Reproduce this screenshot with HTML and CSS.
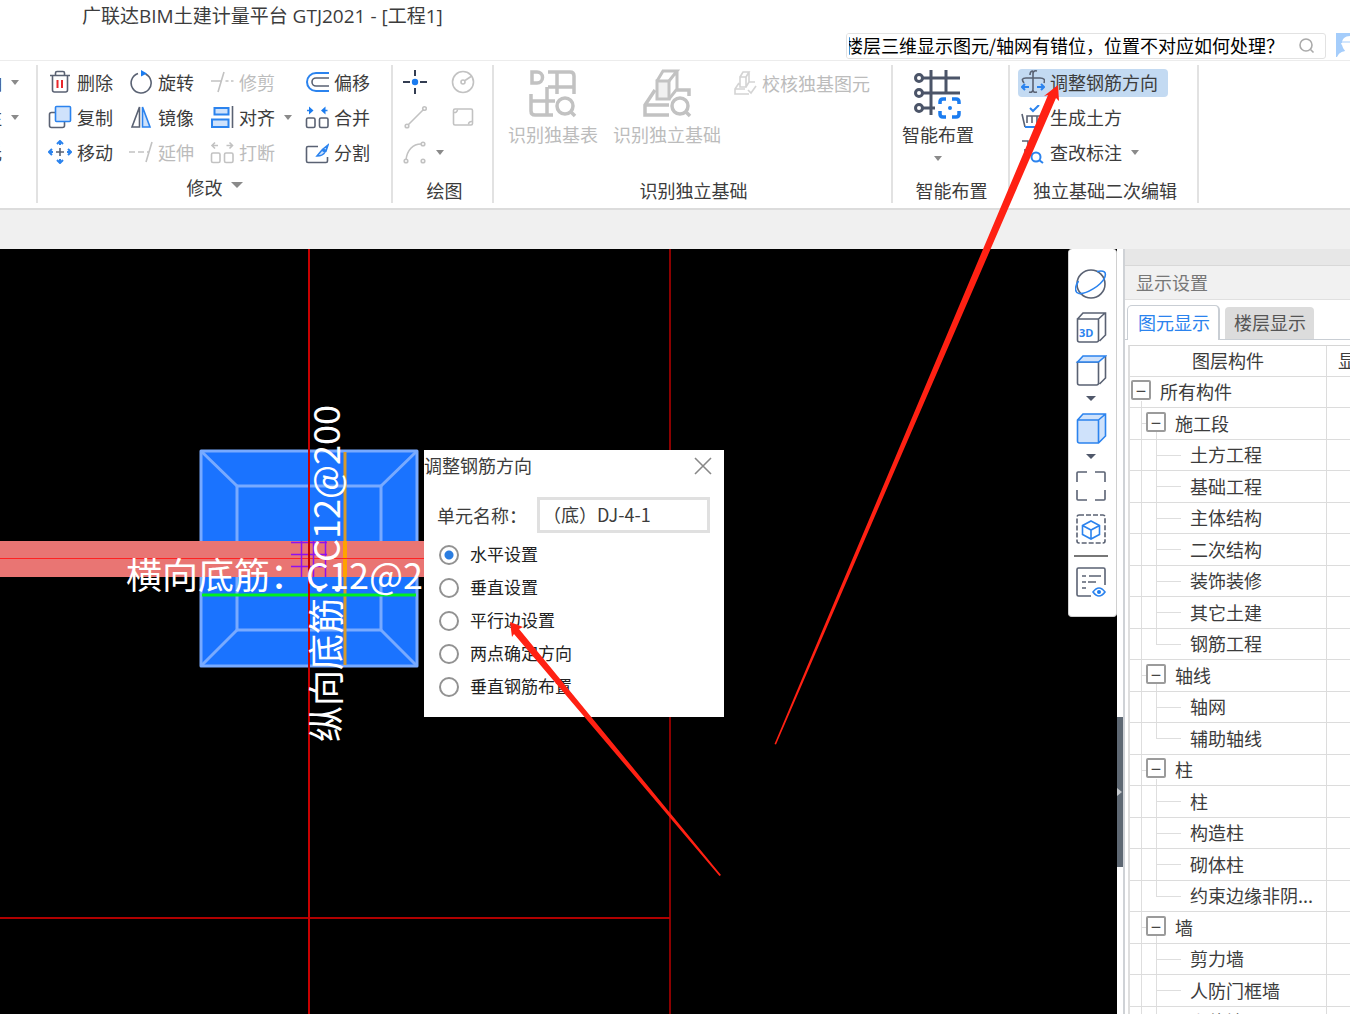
FILE: index.html
```html
<!DOCTYPE html>
<html lang="zh-CN">
<head>
<meta charset="utf-8">
<title>广联达BIM土建计量平台 GTJ2021 - [工程1]</title>
<link rel="stylesheet" href="styles.css">
</head>
<body>
<div class="app">
  <header class="titlebar">
    <h1>广联达BIM土建计量平台 GTJ2021 - [工程1]</h1>
  </header>
  <div class="searchrow">
    <form class="search">
      <input type="text" aria-label="搜索" value="楼层三维显示图元/轴网有错位，位置不对应如何处理？">
      <button type="button" aria-label="查找"><svg width="18" height="18" viewBox="0 0 18 18" fill="none" stroke="#aaa" stroke-width="1.6"><circle cx="8" cy="8" r="6"/><path d="M12.5 12.5l3 3"/></svg></button>
    </form>
    <svg class="avatar" width="14" height="24" viewBox="0 0 14 24"><path fill="#a5cdfb" d="M0 0h14v24H0z"/><path fill="#fff" d="M14 3c-5 0-8 3-8 7-2 0 0 2 0 2 1 4 3 5 3 6-4 1-6 2-8 6h13z"/><path d="M6 9h8" stroke="#a5cdfb"/></svg>
  </div>

  <nav class="ribbon" aria-label="功能区">
    <section class="group edge">
      <div class="rows">
        <button class="tool">轴<i class="caret"></i></button>
        <button class="tool">注<i class="caret"></i></button>
        <button class="tool nocaret">元</button>
      </div>
    </section>

    <section class="group modify">
      <div class="grid">
        <button class="tool"><svg class="ic" viewBox="0 0 24 24"><path d="M2 5.500h20M4.500 5.500V20a2 2 0 0 0 2 2h11a2 2 0 0 0 2-2V5.500M7.500 5V3a1.500 1.500 0 0 1 1.500-1.500h6A1.500 1.500 0 0 1 16.500 3v2"/><path class="r" d="M9.500 10v8M14 10v8"/></svg>删除</button>
        <button class="tool"><svg class="ic" viewBox="0 0 24 24"><path d="M16.500 4A10 10 0 1 1 9 3.500"/><path class="bf" d="M12 0l6 3.500-6 3z"/></svg>旋转</button>
        <button class="tool off"><svg class="ic" viewBox="0 0 24 24"><path d="M1 11h11M15.500 11h3M21 11h2.500M14 2L8 22"/></svg>修剪</button>
        <button class="tool"><svg class="ic" viewBox="0 0 24 24"><path class="b w" d="M24 3H11a9 9 0 0 0 0 18h13"/><path d="M24 8H11a4 4 0 0 0 0 8h13"/></svg>偏移</button>

        <button class="tool"><svg class="ic" viewBox="0 0 24 24"><rect x="1.500" y="7.500" width="15" height="15" rx="2"/><rect class="bl" x="7.500" y="1.500" width="15" height="15" rx="1"/></svg>复制</button>
        <button class="tool"><svg class="ic" viewBox="0 0 24 24"><path d="M10.500 2v20H3z"/><path class="bl" d="M13.500 2v20H21z"/></svg>镜像</button>
        <button class="tool"><svg class="ic" viewBox="0 0 24 24"><path class="bl w" d="M4.500 3h14v6.500h-14zM2 14.500h16.500V22H2z"/><path d="M22.500 1v22"/></svg>对齐<i class="caret"></i></button>
        <button class="tool"><svg class="ic" viewBox="0 0 24 24"><rect x="1.500" y="13" width="8.500" height="9.500" rx="1.500"/><rect x="14.500" y="13" width="8.500" height="9.500" rx="1.500"/><path class="b" d="M2 5.500h4M22.500 5.500h-4"/><path class="bf" d="M4 1.500l4.500 4-4.500 4zM20.500 1.500l-4.500 4 4.500 4z"/></svg>合并</button>

        <button class="tool"><svg class="ic" viewBox="0 0 24 24"><path d="M12 8v8M8 12h8"/><path class="b w" d="M12 1v4M12 19v4M1 12h4M19 12h4M9 4l3-3 3 3M9 20l3 3 3-3M4 9l-3 3 3 3M20 9l3 3-3 3"/></svg>移动</button>
        <button class="tool off"><svg class="ic" viewBox="0 0 24 24"><path d="M0 12h6M9 12h6M18 12h2M23 2l-6 20"/></svg>延伸</button>
        <button class="tool off"><svg class="ic" viewBox="0 0 24 24"><rect x="1.500" y="13" width="8.500" height="9.500" rx="1.500"/><rect x="14.500" y="13" width="8.500" height="9.500" rx="1.500"/><path d="M2 5.500h6M22.500 5.500h-6M5 2.500l-3 3 3 3M19.500 2.500l3 3-3 3"/></svg>打断</button>
        <button class="tool"><svg class="ic" viewBox="0 0 24 24"><path d="M13 6.500H3A1.500 1.500 0 0 0 1.500 8v13A1.500 1.500 0 0 0 3 22.500h18a1.500 1.500 0 0 0 1.500-1.500v-4"/><path class="bl" d="M12 16l5-6 3 2q-2 4-8 4zM18 9l5-4-2 6z"/></svg>分割</button>
      </div>
      <h2 class="label high">修改<i class="caret big"></i></h2>
    </section>

    <section class="group draw">
      <div class="grid">
        <button class="tool" aria-label="点"><svg class="ic" viewBox="0 0 24 24"><path class="d" d="M12 0v6M12 18v6M0 12h7M17 12h7"/><circle class="bf" cx="12" cy="12" r="3.200"/></svg></button>
        <button class="tool off" aria-label="圆"><svg class="ic" viewBox="0 0 24 24"><circle cx="12" cy="12" r="10.500"/><circle cx="12" cy="12" r="2"/><path d="M14 10.500l6-4"/></svg></button>
        <button class="tool off" aria-label="直线"><svg class="ic" viewBox="0 0 24 24"><path d="M5.500 19.500L20 5"/><circle cx="4" cy="21" r="1.800"/><circle cx="21.500" cy="3.500" r="1.800"/></svg></button>
        <button class="tool off" aria-label="矩形"><svg class="ic" viewBox="0 0 24 24"><rect x="2.500" y="4" width="19" height="16" rx="1.500"/><path d="M6.500 4.500a3 3 0 0 1-3.500 3M17.500 19.500a3 3 0 0 1 3.500-3"/></svg></button>
        <button class="tool off" aria-label="弧"><svg class="ic" viewBox="0 0 24 24"><path d="M3 20C4 10 10 4 18 4"/><circle cx="3" cy="21" r="1.800"/><circle cx="20" cy="4" r="1.800"/><circle cx="20" cy="21" r="1.800"/></svg><i class="caret"></i></button>
      </div>
      <h2 class="label">绘图</h2>
    </section>

    <section class="group identify">
      <div class="bigs">
        <button class="big off"><svg width="48" height="48" viewBox="0 0 48 48"><path stroke-width="3.500" d="M3 3h5a5.500 5.500 0 0 1 0 11H3zM19 3h22q4 0 4 4v18M19 18h26M28 3v22M18 18v28M2 25v17q0 4 4 4h18M2 32h24"/><circle cx="36" cy="37" r="8" stroke-width="3.500"/><path stroke-width="3.500" d="M41 42l5 5"/></svg>识别独基表</button>
        <button class="big off"><svg width="48" height="48" viewBox="0 0 48 48"><path stroke-width="3.500" d="M12 21L2 36v10h24M2 36h24M34 21h12v6"/><path stroke-width="3" fill="#f0f0f0" d="M14 12h12v18H14z"/><path stroke-width="3" d="M14 12l6-10h14L26 12M34 2v18l-8 10"/><circle cx="37" cy="37" r="8" stroke-width="3.500"/><path stroke-width="3.500" d="M42 42l5 5"/></svg>识别独立基础</button>
        <button class="tool off check"><svg class="ic" viewBox="0 0 24 24"><path d="M6 12l-4 6v5h14M2 18h10M7 6v10h6V6zM7 6l3-5h6l-3 5M16 1v10l-3 5M15 19l3 3 5-7M16 11h6"/></svg>校核独基图元</button>
      </div>
      <h2 class="label">识别独立基础</h2>
    </section>

    <section class="group smart">
      <div class="bigs">
        <button class="big"><svg width="48" height="48" viewBox="0 0 48 48"><g fill="none" stroke="#4b5468" stroke-width="3"><circle cx="5" cy="9" r="3.500"/><circle cx="5" cy="24" r="3.500"/><circle cx="5" cy="39" r="3.500"/><path d="M8 9h38M8 24h38M8 39h13M17 1v45M32 1v22"/></g><path fill="none" stroke="#1b7cf0" stroke-width="3.500" d="M26 35v-2q0-3 3-3h3M38 30h4q3 0 3 3v2M45 42v3q0 3-3 3h-4M32 48h-3q-3 0-3-3v-3"/><circle cx="36" cy="39" r="2" fill="#1b7cf0"/></svg>智能布置<i class="caret"></i></button>
      </div>
      <h2 class="label">智能布置</h2>
    </section>

    <section class="group second">
      <div class="rows">
        <button class="tool on"><svg class="ic" viewBox="0 0 24 24"><path d="M12 1v18q0 4-4 3M12 4q0-4 4-3M3 13q-4-5 2-5h14q6 0 4 5M9 5q0-4 3-4M12 20q0 3 4 2"/><path class="b w" d="M8 17H1M16 17h7M4 14l-3 3 3 3M20 14l3 3-3 3"/></svg>调整钢筋方向</button>
        <button class="tool"><svg class="ic" viewBox="0 0 24 24"><path d="M1 9l3 13M23 9l-3 13M6 18v-7h14M11 11v7M16 11v7"/><path class="b w" d="M4 22h16M9 3l3 3 6-6"/></svg>生成土方</button>
        <button class="tool"><svg class="ic" viewBox="0 0 24 24"><path d="M1 1h6v4M4 9v6"/><circle class="b w" cx="15" cy="17" r="4.500"/><path class="b w" d="M18 20l4 3"/></svg>查改标注<i class="caret"></i></button>
      </div>
      <h2 class="label">独立基础二次编辑</h2>
    </section>
  </nav>

  <div class="substrip"></div>

  <main class="workspace">
    <div class="canvas">
      <svg class="drawing" width="100%" height="100%">
        <g transform="translate(0 -249)">
          <path d="M670 249v1000" stroke="#8b0000" stroke-width="2"/>
          <path d="M0 918h670" stroke="#b00000" stroke-width="2"/>
          <rect x="200" y="450" width="218" height="217" fill="#1a73ff"/>
          <g fill="none" stroke="#78aaff" stroke-width="3" stroke-linejoin="round"><rect x="201" y="451" width="216" height="215"/><rect x="237" y="486" width="144" height="144"/><path d="M201 451l36 35M417 451l-36 35M201 666l36-36M417 666l-36-36"/></g>
          <path d="M345 452v213" stroke="#d79a2b" stroke-width="3"/>
          <rect x="0" y="541" width="424" height="36" fill="#e97573"/>
          <path d="M345 541v36" stroke="#ffa200" stroke-width="4"/>
          <path d="M0 558.500h424" stroke="#ff2222"/>
          <path d="M291 542.500h36M291 554.500h36M291 566.500h36M301.500 541v36M313.500 541v36M325.500 541v36" stroke="#9010f0" stroke-width="1.500"/>
          <path d="M202 595h214" stroke="#00f020" stroke-width="3"/>
          <path d="M309 249v1000" stroke="#c80000" stroke-width="2"/>
          <text class="mark" x="126" y="589">横向底筋：C12@200</text>
          <text class="mark" transform="translate(340 742) rotate(-90)">纵向底筋：C12@200</text>
        </g>
      </svg>

      <div class="dialog" role="dialog" aria-label="调整钢筋方向">
        <div class="dialog-head"><span>调整钢筋方向</span><button aria-label="关闭"><svg width="18" height="18" viewBox="0 0 18 18"><path d="M1 1l16 16M17 1L1 17" stroke="#888" stroke-width="1.600"/></svg></button></div>
        <div class="field"><label for="unit">单元名称：</label><input id="unit" type="text" value="（底）DJ-4-1"></div>
        <label class="opt"><input type="radio" name="dir" checked><span>水平设置</span></label>
        <label class="opt"><input type="radio" name="dir"><span>垂直设置</span></label>
        <label class="opt"><input type="radio" name="dir"><span>平行边设置</span></label>
        <label class="opt"><input type="radio" name="dir"><span>两点确定方向</span></label>
        <label class="opt"><input type="radio" name="dir"><span>垂直钢筋布置</span></label>
      </div>

      <div class="palette">
        <button aria-label="动态观察"><svg viewBox="0 0 32 32"><circle cx="16" cy="16" r="14"/><path class="b" d="M3.500 13C-1 20 0 25 4 25.500c7 1 22-8 25.500-15.500C32 4 29 2 22 3.500"/></svg></button>
        <button aria-label="三维"><svg viewBox="0 0 32 32"><path d="M2.500 8h21v21q0 2-2 2h-17q-2 0-2-2zM2.500 8L8 2h22.500v22l-6 6M23.500 8l6.500-6"/><text x="4" y="26">3D</text></svg></button>
        <button aria-label="俯视"><svg viewBox="0 0 32 32"><path d="M2.500 8h21v21q0 2-2 2h-17q-2 0-2-2zM30.500 2v22l-6 6"/><path class="bl" d="M2.500 8L8 2h22.500l-7 6z"/></svg></button>
        <i class="caret dark"></i>
        <button aria-label="实体"><svg viewBox="0 0 32 32"><path class="bl" d="M2.500 8L8 2h22.500v22l-7 7h-19q-2 0-2-2zM2.500 8h21v23M23.500 8l7-6"/></svg></button>
        <i class="caret dark"></i>
        <button aria-label="全屏"><svg viewBox="0 0 32 32"><path d="M2 12V3q0-1 1-1h9M20 2h9q1 0 1 1v9M30 20v9q0 1-1 1h-9M12 30H3q-1 0-1-1v-9"/></svg></button>
        <button aria-label="选择"><svg viewBox="0 0 32 32"><rect x="2" y="2" width="28" height="28" rx="2" stroke-dasharray="5 2"/><path class="b" d="M16 8l8.500 4.500v9L16 26l-8.500-4.500v-9zM7.500 12.500L16 17l8.500-4.500M16 17v9"/></svg></button>
        <hr>
        <button aria-label="显示设置"><svg viewBox="0 0 32 32"><path d="M16 30H3.500Q2 30 2 28.500v-25Q2 2 3.500 2h25Q30 2 30 3.500V19M7 10h4M14 10h12M7 16h4M13 16h8M7 22h4"/><path class="b" d="M18 26q6-8 12 0-6 8-12 0z"/><circle class="bf" cx="24" cy="26" r="2"/></svg></button>
      </div>
    </div>

    <div class="splitter"><button aria-label="折叠面板"></button></div>

    <aside class="panel">
      <div class="panel-top"></div>
      <h2 class="panel-title">显示设置</h2>
      <div class="tabs"><button class="tab active">图元显示</button><button class="tab">楼层显示</button></div>
      <table class="tree">
        <thead><tr><th>图层构件</th><th class="next">显示</th></tr></thead>
        <tbody>
          <tr><td class="l0"><button class="box">−</button>所有构件</td><td></td></tr>
          <tr><td class="l1"><button class="box">−</button>施工段</td><td></td></tr>
          <tr><td class="l2">土方工程</td><td></td></tr>
          <tr><td class="l2">基础工程</td><td></td></tr>
          <tr><td class="l2">主体结构</td><td></td></tr>
          <tr><td class="l2">二次结构</td><td></td></tr>
          <tr><td class="l2">装饰装修</td><td></td></tr>
          <tr><td class="l2">其它土建</td><td></td></tr>
          <tr><td class="l2 last">钢筋工程</td><td></td></tr>
          <tr><td class="l1"><button class="box">−</button>轴线</td><td></td></tr>
          <tr><td class="l2">轴网</td><td></td></tr>
          <tr><td class="l2 last">辅助轴线</td><td></td></tr>
          <tr><td class="l1"><button class="box">−</button>柱</td><td></td></tr>
          <tr><td class="l2">柱</td><td></td></tr>
          <tr><td class="l2">构造柱</td><td></td></tr>
          <tr><td class="l2">砌体柱</td><td></td></tr>
          <tr><td class="l2 last">约束边缘非阴...</td><td></td></tr>
          <tr><td class="l1"><button class="box">−</button>墙</td><td></td></tr>
          <tr><td class="l2">剪力墙</td><td></td></tr>
          <tr><td class="l2">人防门框墙</td><td></td></tr>
          <tr><td class="l2">砌体墙</td><td></td></tr>
        </tbody>
      </table>
    </aside>
  </main>

  <svg class="arrows" width="100%" height="100%" fill="#ff2113" aria-hidden="true">
    <path d="M774.500 744L1048 95l-4 1 14-11 1 16-3-3L776 744.500z"/>
    <path d="M719.500 876L514 634l-2 3-2-15 13 5-4 2L721 875z"/>
  </svg>
</div>
</body>
</html>
```
FILE: styles.css
```css
* { box-sizing: border-box; }

body {
  margin: 0;
  font: 18px/22px "Noto Sans CJK SC", sans-serif;
  color: #3c3c3c;
  background: #fff;
}

button, input { font: inherit; color: inherit; margin: 0; }
button { padding: 0; border: 0; background: none; white-space: nowrap; }
h1, h2 { margin: 0; font-size: 18px; font-weight: 400; white-space: nowrap; }

.app {
  position: relative;
  display: flex;
  flex-direction: column;
  height: 100vh;
  overflow: hidden;
}

.titlebar { flex: none; height: 33px; padding: 5px 0 0 82px; }
.titlebar h1 { font-family: "Open Sans", "Noto Sans CJK SC", sans-serif; font-size: 19px; line-height: 22px; }

/* search */
.searchrow { flex: none; display: flex; justify-content: flex-end; gap: 10px; height: 27px; }
.search { display: flex; align-items: center; width: 480px; height: 26px; border: 1px solid #e2e2e2; border-radius: 3px; overflow: hidden; }
.search input { flex: 1; min-width: 0; height: 24px; padding: 0 0 2px 2px; border: 0; outline: 0; color: #000; text-indent: -4px; }
.search button { display: flex; margin-right: 9px; }

/* ribbon */
.ribbon { flex: none; display: flex; height: 150px; padding-top: 4px; border-top: 1px solid #ececec; border-bottom: 2px solid #dcdcdc; }
.group { flex: none; display: flex; flex-direction: column; justify-content: space-between; height: 138px; border-right: 2px solid #e2e2e2; }
.rows, .grid, .bigs { height: 105px; }
.rows { display: grid; grid-template-rows: repeat(3, 35px); align-items: center; justify-items: start; }
.grid { display: grid; grid-template-rows: repeat(3, 35px); align-items: center; }
.label { display: flex; justify-content: center; align-items: center; height: 26px; }
.label.high { height: 32px; }

.tool { display: flex; align-items: center; gap: 5px; height: 28px; line-height: 26px; padding-bottom: 1px; border-radius: 4px; }
.tool.on { background: #c3daf2; }
.off { color: #bcbcbc; }

.ic { flex: none; width: 24px; height: 24px; fill: none; stroke: #5a6273; stroke-width: 1.6; }
.off svg { fill: none; stroke: #c2c2c2; }
.ic .d { stroke: #333d52; stroke-width: 2; }
.r { stroke: #e8262b; stroke-width: 2; }
.b { stroke: #2b83ee; }
.w { stroke-width: 2; }
.bl { stroke: #2b83ee; fill: #cfe2fb; }
.bf { fill: #1b7cf0; stroke: none; }

.caret { flex: none; width: 0; height: 0; border: 4px solid transparent; border-top: 5px solid #8a8a8a; border-bottom: 0; }
.caret.big { margin-left: 8px; border-width: 6px 6px 0; }
.caret.dark { border-width: 5px 5px 0; border-top-color: #50586a; }
.tool .caret { margin-left: 4px; }

.edge { width: 38px; overflow: hidden; }
.edge .rows { grid-template-columns: minmax(0, 1fr); justify-items: end; padding-right: 17px; }
.edge .nocaret { padding-right: 17px; }
.modify { width: 355px; }
.modify .grid { grid-template-columns: 81px 81px 95px 86px; padding-left: 10px; }
.draw { width: 101px; }
.draw .grid { grid-template-columns: 48px 48px; padding-left: 10px; }
.draw .label { padding-left: 4px; }
.identify { width: 399px; }
.bigs { display: flex; align-items: flex-start; }
.identify .bigs { padding-left: 14px; gap: 15px; }
.identify .label { padding-left: 2px; }
.big { display: flex; flex-direction: column; align-items: center; padding-top: 4px; }
.big svg { margin-bottom: 6px; overflow: visible; }
.big .caret { margin-top: 11px; }
.check { margin: 4px 0 0 -3px; }
.check svg { opacity: .7; }
.smart { width: 117px; }
.smart .bigs { padding-left: 9px; }
.smart .label { padding-left: 2px; }
.second { width: 189px; }
.second .rows { padding-left: 8px; }
.second .tool { padding: 0 10px 1px 3px; }
.second .label { padding-left: 3px; }

.substrip { flex: none; height: 39px; background: #f0f0f0; }

/* workspace */
.workspace { flex: 1; min-height: 0; display: grid; grid-template-columns: minmax(0, 1fr) 6px 227px; }
.canvas { position: relative; background: #000; overflow: hidden; }
.drawing { display: block; }
.mark { font-size: 36px; fill: #fff; }

.dialog { position: absolute; left: 424px; top: 201px; width: 300px; padding-bottom: 14px; background: #fff; }
.dialog-head { display: flex; justify-content: space-between; align-items: center; height: 32px; padding-right: 12px; }
.dialog-head span { padding-bottom: 2px; }
.dialog-head button { display: flex; }
.field { display: flex; align-items: center; justify-content: space-between; margin: 15px 14px 5px 13px; }
.field input { width: 173px; height: 36px; padding: 0 3px 2px; border: 3px solid #e0e0e0; border-radius: 0; }
.opt { display: flex; align-items: center; gap: 11px; height: 33px; padding-left: 15px; font-size: 17px; color: #222; }
.opt span { padding-bottom: 2px; }
.opt input { appearance: none; flex: none; width: 20px; height: 20px; border: 2px solid #929292; border-radius: 50%; background: #fff; }
.opt input:checked { background: radial-gradient(circle, #2a7de1 4px, #fff 5px); }

.palette { position: absolute; top: 0; right: 0; display: flex; flex-direction: column; align-items: center; gap: 10px; width: 49px; padding: 18px 3px 18px 0; background: #fff; border: 1px solid #d0d0d0; border-width: 0 1px 1px; border-radius: 4px; }
.palette button { display: flex; align-items: center; height: 33px; }
.palette svg { width: 32px; height: 32px; fill: none; stroke: #5a6273; stroke-width: 1.6; }
.palette .b { stroke: #2b83ee; }
.palette text { font: 700 11px "Open Sans", sans-serif; fill: #2b83ee; stroke: none; }
.palette hr { width: 34px; margin: 0 0 -2px; border: 0; border-top: 2px solid #777; }

.splitter { display: flex; align-items: flex-end; padding-bottom: 147px; background: #fff; }
.splitter button { display: flex; align-items: center; width: 6px; height: 150px; background: #5e6873; }
.splitter button::before { content: ""; border: 4px solid transparent; border-left: 5px solid #c4c8cc; border-right: 0; }

/* display panel */
.panel { min-width: 0; overflow: hidden; border-left: 2px solid #cfd2d6; background: #fff; }
.panel-top { height: 17px; background: #e7e7e7; border-bottom: 1px solid #d8d8d8; }
.panel-title { height: 34px; padding: 5px 0 0 11px; color: #777; background: #f1f1f1; border-bottom: 1px solid #e0e0e0; }
.tabs { display: flex; align-items: flex-end; gap: 5px; height: 40px; padding: 5px 0 0 2px; border-bottom: 1px solid #c9ced4; }
.tab { height: 32px; padding: 0 8px 2px 9px; color: #555; background: #dcdcdc; border-radius: 4px 4px 0 0; }
.tab.active { height: 35px; padding: 0 8px 2px 10px; margin-bottom: -1px; color: #2b83ee; background: #fff; border: 1px solid #c9ced4; border-width: 1px 2px 0 1px; border-radius: 5px 5px 0 0; }

.tree { width: 300px; margin: 5px 0 0 3px; table-layout: fixed; border-spacing: 0; border-left: 2px solid #dedede; border-top: 1px solid #d6d6d6; }
.tree th, .tree td { padding: 0 0 2px; font-weight: 400; text-align: left; white-space: nowrap; border-bottom: 1px solid #dcdcdc; border-right: 1px solid #dcdcdc; }
.tree th { height: 31px; width: 197px; text-align: center; }
.tree th.next { width: auto; padding-left: 11px; text-align: left; }
.tree tr { height: 31px; }
.tree tbody tr:nth-child(even) { height: 32px; }
.tree .box { display: inline-block; width: 20px; height: 20px; margin-right: 9px; line-height: 16px; vertical-align: 1px; border: 2px solid #9b9b9b; border-radius: 2px; background: #fff; color: #444; }
.tree .l0 { padding-left: 1px; background: linear-gradient(#dedede, #dedede) 11px 24px / 1px 8px no-repeat; }
.tree .l1 {
  padding-left: 16px;
  background:
    linear-gradient(#dedede, #dedede) 11px 0 / 1px 100% no-repeat,
    linear-gradient(#dedede, #dedede) 11px 50% / 6px 1px no-repeat,
    linear-gradient(#dedede, #dedede) 26px 24px / 1px 8px no-repeat;
}
.tree .l2 {
  padding-left: 60px;
  background:
    linear-gradient(#dedede, #dedede) 11px 0 / 1px 100% no-repeat,
    linear-gradient(#dedede, #dedede) 26px 0 / 1px 100% no-repeat,
    linear-gradient(#dedede, #dedede) 26px 50% / 25px 1px no-repeat;
}
.tree .l2.last { background-size: 1px 100%, 1px 50%, 25px 1px; }

.arrows { position: absolute; inset: 0; pointer-events: none; }
```
